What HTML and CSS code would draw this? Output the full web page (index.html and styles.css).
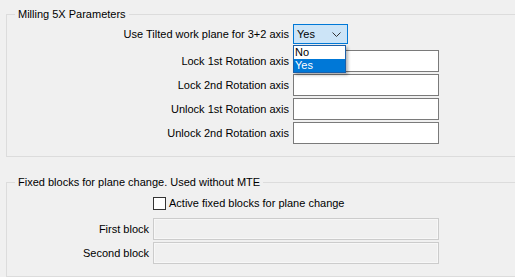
FILE: index.html
```html
<!DOCTYPE html>
<html>
<head>
<meta charset="utf-8">
<link rel="stylesheet" href="styles.css">
</head>
<body>
<div class="page">
  <fieldset class="group g1">
    <legend>Milling 5X Parameters</legend>
    <div class="form f1">
      <label class="lbl lbl-top">Use Tilted work plane for 3+2 axis</label>
      <div class="combo-wrap">
        <div class="combo">
          <span>Yes</span>
          <svg class="chev" width="9" height="5" viewBox="0 0 9 5"><path d="M0.5 0.5 L4.5 4.5 L8.5 0.5" fill="none" stroke="#333" stroke-width="1"/></svg>
        </div>
        <ul class="list">
          <li>No</li>
          <li class="sel">Yes</li>
        </ul>
      </div>
      <label class="lbl">Lock 1st Rotation axis</label><div class="input"></div>
      <label class="lbl">Lock 2nd Rotation axis</label><div class="input"></div>
      <label class="lbl">Unlock 1st Rotation axis</label><div class="input"></div>
      <label class="lbl">Unlock 2nd Rotation axis</label><div class="input"></div>
    </div>
  </fieldset>
  <fieldset class="group g2">
    <legend>Fixed blocks for plane change. Used without MTE</legend>
    <div class="form f2">
      <div class="check-row">
        <span class="box"></span><span class="check-text">Active fixed blocks for plane change</span>
      </div>
      <label class="lbl">First block</label><div class="input disabled"></div>
      <label class="lbl">Second block</label><div class="input disabled"></div>
    </div>
  </fieldset>
</div>
</body>
</html>
```
FILE: styles.css
```css
html, body {
  margin: 0;
  background: #f0f0f0;
  overflow: hidden;
}
body {
  font: 11px "Liberation Sans", Arial, sans-serif;
  color: #000;
}
.page {
  padding-top: 8px;
}
.group {
  margin: 0 0 0 6px;
  padding: 0 0 12px 0;
  border: 1px solid #dcdcdc;
  border-right: 0;
  min-width: 0;
}
.group legend {
  margin-left: 8px;
  padding: 0 3px;
  line-height: 13px;
}
.g2 {
  margin-top: 19px;
}
.form {
  display: grid;
  column-gap: 4px;
  row-gap: 2px;
  align-items: center;
}
.f1 {
  padding-top: 3px;
  grid-template-columns: 282px 146px;
  grid-template-rows: 24px repeat(4, 22px);
}
.f2 {
  padding-top: 5px;
  grid-template-columns: 142px 286px;
  grid-template-rows: repeat(3, 22px);
}
.lbl {
  text-align: right;
  line-height: 13px;
  white-space: nowrap;
}
.lbl-top {
  align-self: start;
  line-height: 20px;
}
.input {
  height: 22px;
  box-sizing: border-box;
  border: 1px solid #7a7a7a;
  background: #fff;
}
.input.disabled {
  border-color: #cccccc;
  background: #f0f0f0;
  box-shadow: inset 0 0 0 1px #f7f7f7;
}
.combo-wrap {
  position: relative;
  align-self: start;
  z-index: 2;
}
.combo {
  width: 55px;
  height: 20px;
  box-sizing: border-box;
  border: 1px solid #0078d7;
  background: #cce4f7;
  display: flex;
  align-items: center;
  justify-content: space-between;
  padding: 0 6px 0 3px;
  line-height: 13px;
}
.chev {
  display: block;
}
.list {
  position: absolute;
  top: 21px;
  left: 0;
  width: 53px;
  box-sizing: border-box;
  margin: 0;
  padding: 0;
  list-style: none;
  border: 1px solid #1b5fa8;
  background: #fff;
  box-shadow: 2px 2px 3px rgba(0, 0, 0, 0.3);
}
.list li {
  height: 13px;
  line-height: 13px;
  padding-left: 1px;
}
.list li.sel {
  background: #0078d7;
  color: #fff;
}
.check-row {
  grid-column: 2;
  align-self: start;
  margin-top: 2px;
  height: 15px;
  display: flex;
  align-items: center;
}
.box {
  width: 13px;
  height: 13px;
  box-sizing: border-box;
  border: 1px solid #333;
  background: #fff;
}
.check-text {
  margin-left: 3px;
  line-height: 13px;
}
```
